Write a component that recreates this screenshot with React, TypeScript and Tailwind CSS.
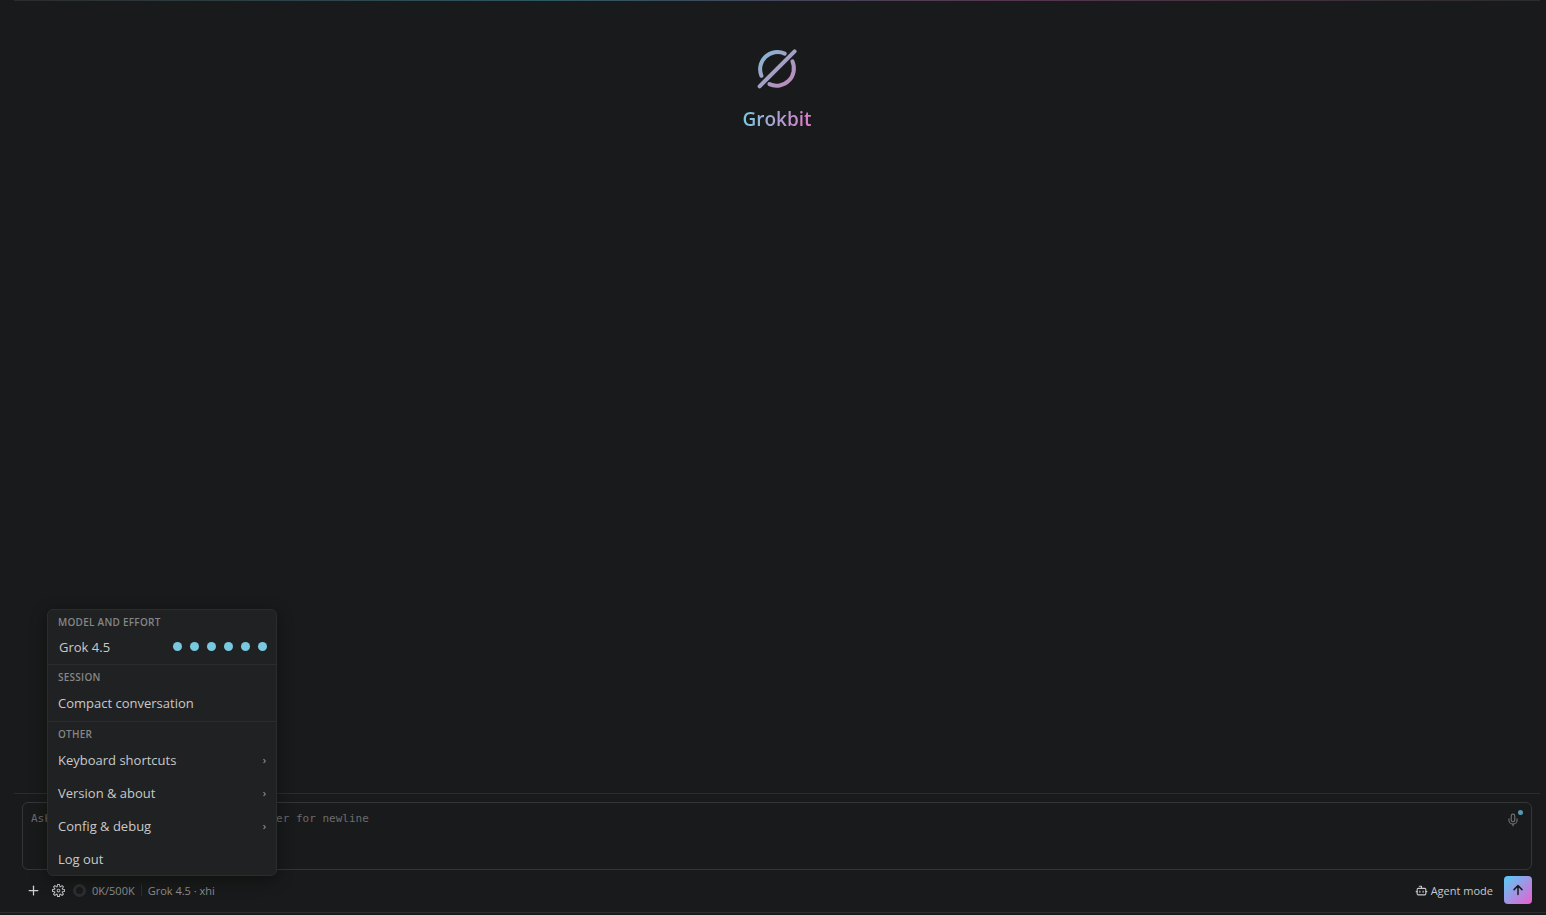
import React, { useState } from 'react';
import { Bot, Mic, Plus } from 'lucide-react';
import { VscSettingsGear } from 'react-icons/vsc';

const EFFORT_LEVELS = ['none', 'minimal', 'low', 'medium', 'high', 'xhigh'];
const SUBMENUS = ['Keyboard shortcuts', 'Version & about', 'Config & debug'];

const Logo: React.FC = () => (
  <svg viewBox="0 0 40 40" className="w-10 h-10" fill="none" stroke="url(#logo-gradient)" strokeWidth="4" strokeLinecap="round">
    <defs>
      <linearGradient id="logo-gradient" gradientUnits="userSpaceOnUse" x1="0" y1="0" x2="40" y2="40">
        <stop offset="0" stopColor="#7fbdd4" />
        <stop offset="1" stopColor="#c782b8" />
      </linearGradient>
    </defs>
    <path d="M4.4 26.8A17.3 17.3 0 0 1 27.7 4.6" />
    <path d="M35.4 12.3A17.3 17.3 0 0 1 12.4 35.1" />
    <path d="M2.6 37.3 37.6 2.3" />
  </svg>
);

const SectionTitle: React.FC<{ children: React.ReactNode }> = ({ children }) => (
  <h2 className="h-[21px] px-2.5 pt-1 text-[10px] leading-4 font-semibold tracking-wide uppercase text-[#858687]">
    {children}
  </h2>
);

const MenuItem: React.FC<{ label: string; submenu?: boolean }> = ({ label, submenu }) => (
  <button type="button" className="flex w-full h-[33px] items-center justify-between px-2.5 text-left hover:bg-white/5">
    <span>{label}</span>
    {submenu && <span className="text-[11px] text-[#a0a1a2]">›</span>}
  </button>
);

const SettingsMenu: React.FC = () => {
  const [effort, setEffort] = useState(5);

  return (
    <div className="absolute left-[25px] bottom-7 z-10 w-[230px] overflow-hidden rounded-md border border-[#2b2c2d] bg-[#202122] text-[13px] leading-5 text-[#c8c9ca] shadow-[0_4px_16px_rgba(0,0,0,0.4)]">
      <section className="border-b border-[#2b2c2d] pb-0.5">
        <SectionTitle>Model and effort</SectionTitle>
        <div className="flex h-[31px] items-center justify-between pl-[11px] pr-[9px]">
          <button type="button">Grok 4.5</button>
          <div className="flex gap-2">
            {EFFORT_LEVELS.map((level, index) => (
              <button
                key={level}
                type="button"
                aria-label={level}
                onClick={() => setEffort(index)}
                className={`size-[9px] rounded-full ${index <= effort ? 'bg-[#78c8e0]' : 'bg-[#3a3b3c]'}`}
              />
            ))}
          </div>
        </div>
      </section>
      <section className="border-b border-[#2b2c2d] pb-0.5">
        <SectionTitle>Session</SectionTitle>
        <MenuItem label="Compact conversation" />
      </section>
      <section>
        <SectionTitle>Other</SectionTitle>
        {SUBMENUS.map((label) => (
          <MenuItem key={label} label={label} submenu />
        ))}
        <MenuItem label="Log out" />
      </section>
    </div>
  );
};

const Toolbar: React.FC = () => (
  <div className="relative mt-1.5 flex h-7 items-center text-[11px] text-[#8c8d8e]">
    <SettingsMenu />
    <button type="button" aria-label="Add context" className="ml-1 mr-[11px] text-[#d0d1d2]">
      <Plus size={15} strokeWidth={2} />
    </button>
    <button type="button" aria-label="Settings" className="mr-2 text-[#c8c9ca]">
      <VscSettingsGear size={13} />
    </button>
    <span className="mr-1.5 size-[13px] rounded-full border-[3px] border-[#2d2e2f]" />
    <span className="pt-0.5">0K/500K</span>
    <span className="mx-1.5 h-3 w-px bg-[#2b2c2d]" />
    <span className="pt-0.5">Grok 4.5 · xhi</span>
    <button type="button" className="ml-auto mr-[11px] flex items-center gap-[3px] text-[#c8c9ca]">
      <Bot size={13} strokeWidth={2} />
      <span className="pt-0.5">Agent mode</span>
    </button>
    <button
      type="button"
      aria-label="Send"
      className="flex size-7 items-center justify-center rounded bg-linear-to-br/srgb from-[#56ccf8] to-[#ea5fd0] text-[#191a1b]"
    >
      <svg viewBox="0 0 14 14" className="size-3.5" fill="none" stroke="currentColor" strokeWidth="1.5" strokeLinecap="round" strokeLinejoin="round">
        <path d="M7 11.5V2.8M3 6.6l4-4 4 4" />
      </svg>
    </button>
  </div>
);

const App: React.FC = () => {
  const [prompt, setPrompt] = useState('');

  return (
    <div className="flex min-h-screen flex-col bg-[#191a1b] font-['Open_Sans',sans-serif]">
      <main className="ml-3.5 mr-1.5 flex flex-1 flex-col">
        <div className="h-px bg-[linear-gradient(90deg,#2b2c2d,#2f5862_35%,#573650_65%,#2b2c2d)]" />
        <div className="flex flex-1 flex-col items-center pt-12">
          <Logo />
          <h1 className="mt-4 bg-linear-to-r/srgb from-[#78c8e0] to-[#e07ac8] bg-clip-text text-[19px] leading-7 font-semibold text-transparent">
            Grokbit
          </h1>
        </div>
        <form className="border-t border-[#2b2c2d] p-2" onSubmit={(e) => e.preventDefault()}>
          <div className="relative">
            <textarea
              aria-label="Prompt"
              value={prompt}
              onChange={(e) => setPrompt(e.target.value)}
              placeholder="Ask Grokbit… Enter to send, Shift+Enter for newline"
              className="block h-[68px] w-full resize-none rounded-md border border-[#343536] p-2 font-['DejaVu_Sans_Mono',monospace] text-[11px] leading-4 text-[#c8c9ca] outline-none placeholder:text-[#6b6c6d]"
            />
            <button type="button" aria-label="Voice input" className="absolute top-[11px] right-3 text-[#6f7071]">
              <Mic size={14} strokeWidth={2} />
              <span className="absolute -top-[3px] -right-[3px] size-[5px] rounded-full bg-[#559ab0]" />
            </button>
          </div>
          <Toolbar />
        </form>
      </main>
      <footer className="h-[3px] border-t border-[#2b2c2d]" />
    </div>
  );
};

export default App;
